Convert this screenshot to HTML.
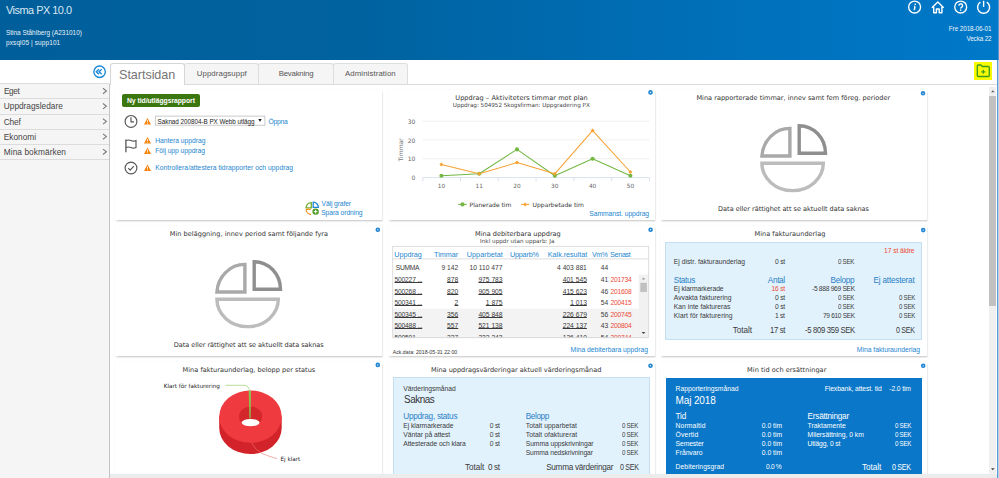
<!DOCTYPE html>
<html lang="sv"><head><meta charset="utf-8"><title>Visma PX 10.0 – Startsidan</title>
<style>
html,body{margin:0;padding:0;}
body{width:999px;height:478px;overflow:hidden;position:relative;background:#fff;font-family:"Liberation Sans",sans-serif;}
.a{position:absolute;}
.t{position:absolute;white-space:pre;}
.card{position:absolute;background:#fff;box-shadow:0.7px 1.5px 1.6px rgba(0,0,0,.16),0 0 1.2px rgba(0,0,0,.07);}
.hdr{left:0;top:0;width:999px;height:60px;background:linear-gradient(90deg,#005f9b 0%,#00629f 35%,#006fb8 70%,#0079c9 100%);}
.side{left:0;top:83.5px;width:109.5px;height:394.5px;background:#f5f5f5;border-right:1px solid #c4c4c4;box-sizing:border-box;}
.side i{position:absolute;left:0;width:109px;height:1px;background:#dcdcdc;}
.tab{position:absolute;top:63px;height:20.5px;box-sizing:border-box;border:1px solid #dedede;border-bottom:none;border-radius:3px 3px 0 0;background:#f5f5f5;}
.gear{position:absolute;width:1.3px;height:1.3px;border:1.65px solid #2386d3;border-radius:50%;}
</style></head><body>
<!-- header -->
<div class="a hdr"></div>
<svg class="a" style="left:900px;top:0" width="99" height="16" viewBox="900 0 99 16" fill="none" stroke="#fff" stroke-width="1.35">
 <circle cx="914.6" cy="7" r="5.95"/><path d="M915 6.3 L914.4 9.7" stroke-width="1.5"/><path d="M913.9 6.2h1.2 M913.6 9.8h1.5" stroke-width="0.8"/><circle cx="915.25" cy="4.25" r="0.85" fill="#fff" stroke="none"/>
 <path d="M931.9 7.8 L937.8 2 L943.7 7.8 M933.7 6.8 V12.8 H936.4 V9 H939.2 V12.8 H941.9 V6.8" stroke-width="1.4" stroke-linejoin="round"/>
 <circle cx="960.7" cy="7" r="5.95"/><path d="M958.9 5.7 a1.85 1.85 0 1 1 2.6 1.65 q-.8.4 -.8 1.25" stroke-width="1.35"/><circle cx="960.7" cy="10.1" r="0.8" fill="#fff" stroke="none"/>
 <path d="M980.4 2.2 a6 6 0 1 0 6.4 0" stroke-width="1.4"/><path d="M983.6 0.8 V6.9" stroke-width="1.4"/>
</svg>
<div class="a" style="left:997.6px;top:0;width:1.4px;height:60px;background:#4f95cf"></div>
<!-- tab bar -->
<div class="a" style="left:110px;top:60px;width:889px;height:23.5px;background:#fff;border-bottom:1px solid #dcdcdc;box-sizing:content-box"></div>
<div class="tab" style="left:183.8px;width:75px"></div>
<div class="tab" style="left:257.8px;width:76.5px"></div>
<div class="tab" style="left:333.3px;width:74.5px"></div>
<div class="tab" style="left:110.3px;width:74.5px;height:21.5px;background:#fff;border-color:#d6d6d6"></div>
<div class="a" style="left:974px;top:62.3px;width:18.3px;height:17.6px;background:#f8fa05"></div>
<svg class="a" style="left:974px;top:62px" width="19" height="18" viewBox="974 62 19 18" fill="none" stroke="#3c9a1c" stroke-width="1.3" stroke-linejoin="round">
 <path d="M977.3 66 q0-1 1-1 h2.6 l1.4 1.5 h6 q1 0 1 1 v8 q0 1 -1 1 h-10 q-1 0 -1-1 z"/><path d="M983.3 69.8v4 M981.3 71.8h4" stroke-width="1.2"/>
</svg>
<!-- sidebar -->
<div class="a side">
 <i style="top:-0.3px"></i><i style="top:14.9px"></i><i style="top:30.1px"></i><i style="top:45.3px"></i><i style="top:60.5px"></i><i style="top:75.7px"></i>
</div>
<svg class="a" style="left:90px;top:62px" width="20" height="100" viewBox="90 62 20 100" fill="none">
 <circle cx="99.6" cy="71.75" r="5.75" stroke="#1487d8" stroke-width="1.35"/>
 <path d="M98.9 69.35 l-2.6 2.4 l2.6 2.4 M101.7 69.35 l-2.6 2.4 l2.6 2.4" stroke="#1487d8" stroke-width="1.35"/>
 <g stroke="#7a7a7a" stroke-width="1.1">
  <path d="M103 88.3 l3.4 2.7 l-3.4 2.7"/><path d="M103 103.5 l3.4 2.7 l-3.4 2.7"/><path d="M103 118.7 l3.4 2.7 l-3.4 2.7"/><path d="M103 133.9 l3.4 2.7 l-3.4 2.7"/><path d="M103 149.1 l3.4 2.7 l-3.4 2.7"/>
 </g>
</svg>
<!-- bottom strip & scrollbar -->
<div class="a" style="left:989.3px;top:87px;width:7px;height:387.5px;background:#f0f0f0"></div>
<div class="a" style="left:989.3px;top:95.8px;width:7px;height:210px;background:#c1c1c1"></div>
<svg class="a" style="left:989px;top:87px" width="8" height="388" viewBox="989 87 8 388"><path d="M991 92.3 l1.8-2 l1.8 2z" fill="#606060"/><path d="M991 468.2 l1.8 2 l1.8-2z" fill="#404040"/></svg>
<div class="a" style="left:997px;top:60px;width:1.4px;height:418px;background:#5b9bd5"></div>
<div class="a" style="left:998.4px;top:60px;width:0.6px;height:418px;background:#b9d3ec"></div>

<!-- cards -->
<div class="card" style="left:115px;top:89.7px;width:267.4px;height:130.1px"></div>
<div class="card" style="left:387.6px;top:89.7px;width:267.5px;height:130.1px"></div>
<div class="card" style="left:660px;top:89.7px;width:267.4px;height:130.1px"></div>
<div class="card" style="left:115px;top:225.8px;width:267.4px;height:130.1px"></div>
<div class="card" style="left:387.6px;top:225.8px;width:267.5px;height:130.1px"></div>
<div class="card" style="left:660px;top:225.8px;width:267.4px;height:130.1px"></div>
<div class="card" style="left:115px;top:361.9px;width:267.4px;height:116px"></div>
<div class="card" style="left:387.6px;top:361.9px;width:267.5px;height:116px"></div>
<div class="card" style="left:660px;top:361.9px;width:267.4px;height:116px"></div>
<!-- gears -->
<svg class="a" style="left:0;top:0" width="999" height="478" viewBox="0 0 999 478" fill="none" stroke="#2386d3" stroke-width="1.7"><circle cx="650.5" cy="92.4" r="1.45"/><circle cx="923.0" cy="93.3" r="1.45"/><circle cx="377.8" cy="229.7" r="1.45"/><circle cx="650.6" cy="229.7" r="1.45"/><circle cx="923.2" cy="230.1" r="1.45"/><circle cx="377.8" cy="364.9" r="1.45"/><circle cx="650.5" cy="365.7" r="1.45"/><circle cx="923.2" cy="365.8" r="1.45"/></svg>

<!-- card1 -->
<div class="a" style="left:121.5px;top:94.4px;width:78.6px;height:12.2px;background:#3c760f;border-radius:2px"></div>
<svg class="a" style="left:120px;top:110px" width="150" height="70" viewBox="120 110 150 70" fill="none">
 <rect x="155.3" y="116.1" width="109.6" height="9.1" fill="#fff" stroke="#bdbdbd" stroke-width="0.8"/>
 <g stroke="#555" stroke-width="1.15">
  <circle cx="131" cy="121.4" r="5.9"/><path d="M131 117.2 V121.8 H134"/>
  <path d="M125.9 139.4 V152.2" stroke-width="1.3"/><path d="M126 140.6 q2.5-1.2 5 0 t5 0 V147.6 q-2.5 1.2-5 0 t-5 0"/>
  <circle cx="131" cy="168" r="5.9"/><path d="M128.3 168.2 l1.9 1.9 l3.6-3.9"/>
 </g>
 <g fill="#f5820b">
  <path d="M147.5 118.1 l3.5 6.4 h-7z"/><path d="M147.5 137.0 l3.5 6.4 h-7z"/><path d="M147.5 147.5 l3.5 6.4 h-7z"/><path d="M147.5 164.5 l3.5 6.4 h-7z"/>
 </g>
 <g stroke="#fff" stroke-width="0.8"><path d="M147.5 120.2v2.2 M147.5 123.0v0.8 M147.5 139.1v2.2 M147.5 141.9v0.8 M147.5 149.6v2.2 M147.5 152.4v0.8 M147.5 166.6v2.2 M147.5 169.4v0.8"/></g>
 <path d="M258.3 119 h3.4 l-1.7 2.8z" fill="#111"/>
</svg>
<svg class="a" style="left:304px;top:200px" width="17" height="17" viewBox="304 200 17 17" fill="none" stroke-width="1.3">
 <path d="M311.3 202.6 a5.2 5.2 0 0 0 -5.2 5.2 h5.2z" stroke="#6fae2e"/>
 <path d="M313.2 202.2 a5.2 5.2 0 0 1 5.2 5.2 h-5.2z" stroke="#1c86d6"/>
 <path d="M306.1 209.3 a5.2 5.2 0 0 0 5 5.2 M306.1 209.3 h4.6" stroke="#f59322"/>
 <circle cx="315.6" cy="211.6" r="3.2" fill="#4e9a22" stroke="none"/><path d="M315.6 209.8v3.6 M313.8 211.6h3.6" stroke="#fff" stroke-width="1"/>
</svg>

<!-- card2 chart -->
<svg class="a" style="left:388px;top:110px" width="267" height="100" viewBox="388 110 267 100" fill="none">
 <g stroke="#e6e6e6" stroke-width="0.6"><path d="M422.8 121.2H649.5 M422.8 139.9H649.5 M422.8 158.7H649.5"/></g>
 <path d="M422.8 177.6H649.5 M422.8 177.6v3.6 M460.5 177.6v3.6 M498.3 177.6v3.6 M536.1 177.6v3.6 M573.9 177.6v3.6 M611.7 177.6v3.6 M649.5 177.6v3.6" stroke="#ccd6eb" stroke-width="0.7"/>
 <polyline points="441.4,175.7 479.2,173.8 517,149.4 554.8,175.7 592.6,158.8 630.4,175.7" stroke="#74b843" stroke-width="1.05" stroke-linejoin="round"/>
 <polyline points="441.4,164.4 479.2,173.8 517,162.6 554.8,173.8 592.6,130.6 630.4,172" stroke="#f7a233" stroke-width="1.05" stroke-linejoin="round"/>
 <g fill="#74b843"><circle cx="441.4" cy="175.7" r="2.05"/><circle cx="479.2" cy="173.8" r="2.05"/><circle cx="517" cy="149.4" r="2.05"/><circle cx="554.8" cy="175.7" r="2.05"/><circle cx="592.6" cy="158.8" r="2.05"/><circle cx="630.4" cy="175.7" r="2.05"/></g>
 <g fill="#f7a233"><path d="M441.4 162.4l2 2-2 2-2-2z M479.2 171.8l2 2-2 2-2-2z M517 160.6l2 2-2 2-2-2z M554.8 171.8l2 2-2 2-2-2z M592.6 128.6l2 2-2 2-2-2z M630.4 170l2 2-2 2-2-2z"/></g>
 <path d="M458.3 204.4h8.4" stroke="#74b843" stroke-width="1.05"/><circle cx="462.5" cy="204.4" r="2.05" fill="#74b843"/>
 <path d="M521 204.4h8.4" stroke="#f7a233" stroke-width="1.05"/><path d="M525.2 202.4l2 2-2 2-2-2z" fill="#f7a233"/>
 <text transform="translate(402.6 149.8) rotate(-90)" text-anchor="middle" font-family="DejaVu Sans, Liberation Sans, sans-serif" font-size="6.1" fill="#777">Timmar</text>
</svg>

<!-- no-data pies -->
<svg class="a" style="left:755px;top:120px" width="80" height="78" viewBox="755 120 80 78" fill="none" stroke-width="3.4">
 <path d="M789.9 128.4 V156 H761.9 A28 29.6 0 0 1 789.9 128.4z" stroke="#a9a9a9"/>
 <path d="M799.2 125.7 A26.3 27.6 0 0 1 825.5 153.3 H799.2z" stroke="#8f8f8f"/>
 <path d="M761.9 163.3 H823.3 A30.7 27.4 0 0 1 761.9 163.3z" stroke="#bcbcbc"/>
</svg>
<svg class="a" style="left:209.5px;top:256.1px" width="80" height="78" viewBox="755 120 80 78" fill="none" stroke-width="3.4">
 <path d="M789.9 128.4 V156 H761.9 A28 29.6 0 0 1 789.9 128.4z" stroke="#a9a9a9"/>
 <path d="M799.2 125.7 A26.3 27.6 0 0 1 825.5 153.3 H799.2z" stroke="#8f8f8f"/>
 <path d="M761.9 163.3 H823.3 A30.7 27.4 0 0 1 761.9 163.3z" stroke="#bcbcbc"/>
</svg>

<!-- card5 table -->
<svg class="a" style="left:390px;top:244px" width="262" height="96" viewBox="390 244 262 96">
 <rect x="392.7" y="308.6" width="246" height="29.1" fill="#f3f3f3"/>
 <rect x="638.8" y="274.6" width="9.9" height="63.1" fill="#f1f1f1"/>
 <rect x="640.3" y="282.8" width="6.6" height="9.2" fill="#c1c1c1"/>
 <path d="M641.6 279.6 l1.9-2 l1.9 2z" fill="#a0a0a0"/><path d="M641.6 332 l1.9 2 l1.9-2z" fill="#444"/>
 <rect x="392.7" y="246.3" width="256" height="91.4" fill="none" stroke="#d6d6d6" stroke-width="0.8"/>
 <path d="M392.7 258.9 H648.7" stroke="#d6d6d6" stroke-width="0.8"/>
</svg>

<!-- card6 panel -->
<div class="a" style="left:665px;top:241.7px;width:256.5px;height:98.8px;background:#e2f2fd;border:0.6px solid #c4dff2;box-sizing:border-box"></div>

<!-- card7 donut -->
<svg class="a" style="left:160px;top:380px" width="160" height="90" viewBox="160 380 160 90" fill="none">
 <path d="M219.2 416.6 V428.1 A31.25 26 0 0 0 281.7 428.1 V416.6z" fill="#d3232a"/>
 <ellipse cx="250.45" cy="416.6" rx="31.25" ry="26.2" fill="#ef3a3f"/>
 <ellipse cx="250.6" cy="416.5" rx="11.6" ry="10" fill="#d3272c"/>
 <ellipse cx="250.6" cy="422.6" rx="8.9" ry="3.7" fill="#fff"/>
 <path d="M248.7 391 L251 390.6 L250.6 418.4 L249.4 418.4z" fill="#8cc152"/>
 <path d="M225.5 385.3 H244 q5 0 5.4 6" stroke="#9ccf6b" stroke-width="0.7"/>
 <path d="M251.6 442.7 q4 8 10 10.6 t15.4 5.3" stroke="#f0787c" stroke-width="0.6"/>
</svg>

<!-- card8 panel -->
<div class="a" style="left:393.2px;top:377.4px;width:256.4px;height:100px;background:#e2f2fd;border:0.6px solid #c4dff2;border-bottom:none;box-sizing:border-box"></div>
<!-- card9 panel -->
<div class="a" style="left:665.6px;top:377.6px;width:256.1px;height:100px;background:#0a77c9"></div>

<span class="t" style="left:6.00px;top:2.50px;font:400 11.00px/14.3px 'Liberation Sans', sans-serif;color:#dbe8f3;letter-spacing:-0.495px;transform:scaleX(0.991);transform-origin:0 0;">Visma PX 10.0</span>
<span class="t" style="left:6.00px;top:29.36px;font:400 6.45px/8.38px 'Liberation Sans', sans-serif;color:#e8f1f8;">Stina Ståhlberg (A231010)</span>
<span class="t" style="left:6.00px;top:39.36px;font:400 6.45px/8.38px 'Liberation Sans', sans-serif;color:#e8f1f8;letter-spacing:0.129px;">pxsql05 | supp101</span>
<span class="t" style="left:948.80px;top:24.66px;font:400 6.30px/8.19px 'Liberation Sans', sans-serif;color:#eef5fb;letter-spacing:-0.056px;">Fre 2018-06-01</span>
<span class="t" style="left:966.50px;top:34.66px;font:400 6.30px/8.19px 'Liberation Sans', sans-serif;color:#eef5fb;letter-spacing:-0.117px;">Vecka 22</span>
<span class="t" style="left:119.10px;top:66.96px;font:400 12.60px/16.38px 'Liberation Sans', sans-serif;color:#757575;letter-spacing:-0.059px;">Startsidan</span>
<span class="t" style="left:196.80px;top:69.08px;font:400 7.80px/10.14px 'Liberation Sans', sans-serif;color:#555;letter-spacing:0.091px;">Uppdragsuppf</span>
<span class="t" style="left:278.70px;top:69.08px;font:400 7.80px/10.14px 'Liberation Sans', sans-serif;color:#555;letter-spacing:-0.203px;">Bevakning</span>
<span class="t" style="left:345.00px;top:69.08px;font:400 7.80px/10.14px 'Liberation Sans', sans-serif;color:#555;letter-spacing:0.098px;">Administration</span>
<span class="t" style="left:3.80px;top:86.26px;font:400 8.30px/10.79px 'Liberation Sans', sans-serif;color:#444;letter-spacing:-0.373px;transform:scaleX(0.991);transform-origin:0 0;">Eget</span>
<span class="t" style="left:3.80px;top:101.46px;font:400 8.30px/10.79px 'Liberation Sans', sans-serif;color:#444;letter-spacing:-0.005px;">Uppdragsledare</span>
<span class="t" style="left:3.80px;top:116.66px;font:400 8.30px/10.79px 'Liberation Sans', sans-serif;color:#444;letter-spacing:-0.178px;">Chef</span>
<span class="t" style="left:3.80px;top:131.85px;font:400 8.30px/10.79px 'Liberation Sans', sans-serif;color:#444;letter-spacing:-0.015px;">Ekonomi</span>
<span class="t" style="left:3.80px;top:147.05px;font:400 8.30px/10.79px 'Liberation Sans', sans-serif;color:#444;letter-spacing:0.065px;">Mina bokmärken</span>
<span class="t" style="left:127.00px;top:97.13px;font:700 6.80px/8.84px 'Liberation Sans', sans-serif;color:#fff;letter-spacing:-0.038px;">Ny tid/utläggsrapport</span>
<span class="t" style="left:157.60px;top:118.36px;font:400 6.30px/8.19px 'Liberation Sans', sans-serif;color:#222;letter-spacing:-0.021px;">Saknad 200804-B PX Webb utlägg</span>
<span class="t" style="left:268.60px;top:118.06px;font:400 6.75px/8.78px 'Liberation Sans', sans-serif;color:#2586cf;letter-spacing:-0.292px;">Öppna</span>
<span class="t" style="left:155.20px;top:136.86px;font:400 6.75px/8.78px 'Liberation Sans', sans-serif;color:#2586cf;letter-spacing:-0.033px;">Hantera uppdrag</span>
<span class="t" style="left:155.20px;top:147.06px;font:400 6.75px/8.78px 'Liberation Sans', sans-serif;color:#2586cf;letter-spacing:-0.057px;">Följ upp uppdrag</span>
<span class="t" style="left:155.20px;top:163.81px;font:400 6.75px/8.78px 'Liberation Sans', sans-serif;color:#2586cf;letter-spacing:0.027px;">Kontrollera/attestera tidrapporter och uppdrag</span>
<span class="t" style="left:321.60px;top:200.16px;font:400 6.75px/8.78px 'Liberation Sans', sans-serif;color:#2586cf;letter-spacing:-0.136px;">Välj grafer</span>
<span class="t" style="left:321.20px;top:208.86px;font:400 6.75px/8.78px 'Liberation Sans', sans-serif;color:#2586cf;letter-spacing:-0.084px;">Spara ordning</span>
<span class="t" style="left:455.30px;top:93.69px;font:400 6.55px/8.52px 'DejaVu Sans', 'Liberation Sans', sans-serif;color:#333;letter-spacing:0.056px;">Uppdrag – Aktiviteters timmar mot plan</span>
<span class="t" style="left:452.80px;top:102.48px;font:400 5.65px/7.35px 'DejaVu Sans', 'Liberation Sans', sans-serif;color:#444;letter-spacing:-0.016px;">Uppdrag: 504952 Skogsfirman: Uppgradering PX</span>
<span class="t" style="left:469.60px;top:201.35px;font:400 6.00px/7.8px 'DejaVu Sans', 'Liberation Sans', sans-serif;color:#333;letter-spacing:-0.014px;">Planerade tim</span>
<span class="t" style="left:532.60px;top:201.35px;font:400 6.00px/7.8px 'DejaVu Sans', 'Liberation Sans', sans-serif;color:#333;letter-spacing:0.025px;">Upparbetade tim</span>
<span class="t" style="left:589.30px;top:210.36px;font:400 6.75px/8.78px 'Liberation Sans', sans-serif;color:#2586cf;letter-spacing:-0.062px;">Sammanst. uppdrag</span>
<span class="t" style="left:696.40px;top:93.89px;font:400 6.55px/8.52px 'DejaVu Sans', 'Liberation Sans', sans-serif;color:#333;letter-spacing:0.014px;">Mina rapporterade timmar, innev samt fem föreg. perioder</span>
<span class="t" style="left:718.10px;top:204.99px;font:400 6.55px/8.52px 'DejaVu Sans', 'Liberation Sans', sans-serif;color:#333;letter-spacing:-0.025px;">Data eller rättighet att se aktuellt data saknas</span>
<span class="t" style="left:169.80px;top:230.19px;font:400 6.55px/8.52px 'DejaVu Sans', 'Liberation Sans', sans-serif;color:#333;letter-spacing:0.025px;">Min beläggning, innev period samt följande fyra</span>
<span class="t" style="left:173.70px;top:341.19px;font:400 6.55px/8.52px 'DejaVu Sans', 'Liberation Sans', sans-serif;color:#333;letter-spacing:-0.042px;">Data eller rättighet att se aktuellt data saknas</span>
<span class="t" style="left:475.00px;top:230.39px;font:400 6.55px/8.52px 'DejaVu Sans', 'Liberation Sans', sans-serif;color:#333;letter-spacing:0.008px;">Mina debiterbara uppdrag</span>
<span class="t" style="left:480.10px;top:238.07px;font:400 5.65px/7.35px 'DejaVu Sans', 'Liberation Sans', sans-serif;color:#444;letter-spacing:0.019px;">Inkl uppdr utan upparb: Ja</span>
<span class="t" style="left:394.30px;top:250.27px;font:400 7.20px/9.36px 'Liberation Sans', sans-serif;color:#2586cf;">Uppdrag</span>
<span class="t" style="left:434.00px;top:250.27px;font:400 7.20px/9.36px 'Liberation Sans', sans-serif;color:#2586cf;letter-spacing:0.034px;">Timmar</span>
<span class="t" style="left:466.80px;top:250.27px;font:400 7.20px/9.36px 'Liberation Sans', sans-serif;color:#2586cf;letter-spacing:0.053px;">Upparbetat</span>
<span class="t" style="left:509.90px;top:250.27px;font:400 7.20px/9.36px 'Liberation Sans', sans-serif;color:#2586cf;letter-spacing:-0.153px;">Upparb%</span>
<span class="t" style="left:547.80px;top:250.27px;font:400 7.20px/9.36px 'Liberation Sans', sans-serif;color:#2586cf;letter-spacing:-0.018px;">Kalk.resultat</span>
<span class="t" style="left:592.40px;top:250.27px;font:400 7.20px/9.36px 'Liberation Sans', sans-serif;color:#2586cf;letter-spacing:-0.324px;transform:scaleX(0.956);transform-origin:0 0;">Vm%</span>
<span class="t" style="left:610.00px;top:250.27px;font:400 7.20px/9.36px 'Liberation Sans', sans-serif;color:#2586cf;letter-spacing:-0.303px;">Senast</span>
<span class="t" style="left:395.80px;top:264.19px;font:400 6.70px/8.71px 'Liberation Sans', sans-serif;color:#3a3a3a;letter-spacing:-0.301px;">SUMMA</span>
<span class="t" style="left:441.53px;top:264.19px;font:400 6.70px/8.71px 'Liberation Sans', sans-serif;color:#3a3a3a;">9 142</span>
<span class="t" style="left:469.56px;top:264.19px;font:400 6.70px/8.71px 'Liberation Sans', sans-serif;color:#3a3a3a;">10 110 477</span>
<span class="t" style="left:557.09px;top:264.19px;font:400 6.70px/8.71px 'Liberation Sans', sans-serif;color:#3a3a3a;">4 403 881</span>
<span class="t" style="left:600.75px;top:264.19px;font:400 6.70px/8.71px 'Liberation Sans', sans-serif;color:#3a3a3a;">44</span>
<span class="t" style="left:394.60px;top:276.19px;font:400 6.70px/8.71px 'Liberation Sans', sans-serif;color:#3a3a3a;letter-spacing:-0.212px;text-decoration:underline;text-decoration-thickness:0.55px;text-underline-offset:0.4px;">500227 ...</span>
<span class="t" style="left:447.12px;top:276.19px;font:400 6.70px/8.71px 'Liberation Sans', sans-serif;color:#3a3a3a;text-decoration:underline;text-decoration-thickness:0.55px;text-underline-offset:0.4px;">878</span>
<span class="t" style="left:478.38px;top:276.19px;font:400 6.70px/8.71px 'Liberation Sans', sans-serif;color:#3a3a3a;text-decoration:underline;text-decoration-thickness:0.55px;text-underline-offset:0.4px;">975 783</span>
<span class="t" style="left:562.68px;top:276.19px;font:400 6.70px/8.71px 'Liberation Sans', sans-serif;color:#3a3a3a;text-decoration:underline;text-decoration-thickness:0.55px;text-underline-offset:0.4px;">401 545</span>
<span class="t" style="left:600.75px;top:276.19px;font:400 6.70px/8.71px 'Liberation Sans', sans-serif;color:#3a3a3a;">41</span>
<span class="t" style="left:610.60px;top:276.19px;font:400 6.70px/8.71px 'Liberation Sans', sans-serif;color:#ee4a33;letter-spacing:-0.232px;">201734</span>
<span class="t" style="left:394.60px;top:287.75px;font:400 6.70px/8.71px 'Liberation Sans', sans-serif;color:#3a3a3a;letter-spacing:-0.212px;text-decoration:underline;text-decoration-thickness:0.55px;text-underline-offset:0.4px;">500268 ...</span>
<span class="t" style="left:447.12px;top:287.75px;font:400 6.70px/8.71px 'Liberation Sans', sans-serif;color:#3a3a3a;text-decoration:underline;text-decoration-thickness:0.55px;text-underline-offset:0.4px;">820</span>
<span class="t" style="left:478.38px;top:287.75px;font:400 6.70px/8.71px 'Liberation Sans', sans-serif;color:#3a3a3a;text-decoration:underline;text-decoration-thickness:0.55px;text-underline-offset:0.4px;">905 905</span>
<span class="t" style="left:562.68px;top:287.75px;font:400 6.70px/8.71px 'Liberation Sans', sans-serif;color:#3a3a3a;text-decoration:underline;text-decoration-thickness:0.55px;text-underline-offset:0.4px;">415 623</span>
<span class="t" style="left:600.75px;top:287.75px;font:400 6.70px/8.71px 'Liberation Sans', sans-serif;color:#3a3a3a;">46</span>
<span class="t" style="left:610.60px;top:287.75px;font:400 6.70px/8.71px 'Liberation Sans', sans-serif;color:#ee4a33;letter-spacing:-0.232px;">201608</span>
<span class="t" style="left:394.60px;top:299.31px;font:400 6.70px/8.71px 'Liberation Sans', sans-serif;color:#3a3a3a;letter-spacing:-0.212px;text-decoration:underline;text-decoration-thickness:0.55px;text-underline-offset:0.4px;">500341 ...</span>
<span class="t" style="left:454.57px;top:299.31px;font:400 6.70px/8.71px 'Liberation Sans', sans-serif;color:#3a3a3a;text-decoration:underline;text-decoration-thickness:0.55px;text-underline-offset:0.4px;">2</span>
<span class="t" style="left:485.83px;top:299.31px;font:400 6.70px/8.71px 'Liberation Sans', sans-serif;color:#3a3a3a;text-decoration:underline;text-decoration-thickness:0.55px;text-underline-offset:0.4px;">1 875</span>
<span class="t" style="left:570.13px;top:299.31px;font:400 6.70px/8.71px 'Liberation Sans', sans-serif;color:#3a3a3a;text-decoration:underline;text-decoration-thickness:0.55px;text-underline-offset:0.4px;">1 013</span>
<span class="t" style="left:600.75px;top:299.31px;font:400 6.70px/8.71px 'Liberation Sans', sans-serif;color:#3a3a3a;">54</span>
<span class="t" style="left:610.60px;top:299.31px;font:400 6.70px/8.71px 'Liberation Sans', sans-serif;color:#ee4a33;letter-spacing:-0.232px;">200415</span>
<span class="t" style="left:394.60px;top:310.88px;font:400 6.70px/8.71px 'Liberation Sans', sans-serif;color:#3a3a3a;letter-spacing:-0.212px;text-decoration:underline;text-decoration-thickness:0.55px;text-underline-offset:0.4px;">500345 ...</span>
<span class="t" style="left:447.12px;top:310.88px;font:400 6.70px/8.71px 'Liberation Sans', sans-serif;color:#3a3a3a;text-decoration:underline;text-decoration-thickness:0.55px;text-underline-offset:0.4px;">356</span>
<span class="t" style="left:478.38px;top:310.88px;font:400 6.70px/8.71px 'Liberation Sans', sans-serif;color:#3a3a3a;text-decoration:underline;text-decoration-thickness:0.55px;text-underline-offset:0.4px;">405 848</span>
<span class="t" style="left:562.68px;top:310.88px;font:400 6.70px/8.71px 'Liberation Sans', sans-serif;color:#3a3a3a;text-decoration:underline;text-decoration-thickness:0.55px;text-underline-offset:0.4px;">226 679</span>
<span class="t" style="left:600.75px;top:310.88px;font:400 6.70px/8.71px 'Liberation Sans', sans-serif;color:#3a3a3a;">56</span>
<span class="t" style="left:610.60px;top:310.88px;font:400 6.70px/8.71px 'Liberation Sans', sans-serif;color:#ee4a33;letter-spacing:-0.232px;">200745</span>
<span class="t" style="left:394.60px;top:322.44px;font:400 6.70px/8.71px 'Liberation Sans', sans-serif;color:#3a3a3a;letter-spacing:-0.212px;text-decoration:underline;text-decoration-thickness:0.55px;text-underline-offset:0.4px;">500488 ...</span>
<span class="t" style="left:447.12px;top:322.44px;font:400 6.70px/8.71px 'Liberation Sans', sans-serif;color:#3a3a3a;text-decoration:underline;text-decoration-thickness:0.55px;text-underline-offset:0.4px;">557</span>
<span class="t" style="left:478.38px;top:322.44px;font:400 6.70px/8.71px 'Liberation Sans', sans-serif;color:#3a3a3a;text-decoration:underline;text-decoration-thickness:0.55px;text-underline-offset:0.4px;">521 138</span>
<span class="t" style="left:562.68px;top:322.44px;font:400 6.70px/8.71px 'Liberation Sans', sans-serif;color:#3a3a3a;text-decoration:underline;text-decoration-thickness:0.55px;text-underline-offset:0.4px;">224 137</span>
<span class="t" style="left:600.75px;top:322.44px;font:400 6.70px/8.71px 'Liberation Sans', sans-serif;color:#3a3a3a;">43</span>
<span class="t" style="left:610.60px;top:322.44px;font:400 6.70px/8.71px 'Liberation Sans', sans-serif;color:#ee4a33;letter-spacing:-0.232px;">200804</span>
<span class="t" style="left:394.60px;top:334.00px;font:400 6.70px/8.71px 'Liberation Sans', sans-serif;color:#3a3a3a;letter-spacing:-0.212px;text-decoration:underline;text-decoration-thickness:0.55px;text-underline-offset:0.4px;">500501 ...</span>
<span class="t" style="left:447.12px;top:334.00px;font:400 6.70px/8.71px 'Liberation Sans', sans-serif;color:#3a3a3a;text-decoration:underline;text-decoration-thickness:0.55px;text-underline-offset:0.4px;">227</span>
<span class="t" style="left:478.38px;top:334.00px;font:400 6.70px/8.71px 'Liberation Sans', sans-serif;color:#3a3a3a;text-decoration:underline;text-decoration-thickness:0.55px;text-underline-offset:0.4px;">232 243</span>
<span class="t" style="left:562.68px;top:334.00px;font:400 6.70px/8.71px 'Liberation Sans', sans-serif;color:#3a3a3a;text-decoration:underline;text-decoration-thickness:0.55px;text-underline-offset:0.4px;">126 410</span>
<span class="t" style="left:600.75px;top:334.00px;font:400 6.70px/8.71px 'Liberation Sans', sans-serif;color:#3a3a3a;">54</span>
<span class="t" style="left:610.60px;top:334.00px;font:400 6.70px/8.71px 'Liberation Sans', sans-serif;color:#ee4a33;letter-spacing:-0.232px;">200744</span>
<span class="t" style="left:392.70px;top:349.07px;font:400 5.20px/6.76px 'Liberation Sans', sans-serif;color:#333;letter-spacing:0.021px;">Ack.data: 2018-05-31 22:00</span>
<span class="t" style="left:570.50px;top:346.46px;font:400 6.75px/8.78px 'Liberation Sans', sans-serif;color:#2586cf;letter-spacing:0.004px;">Mina debiterbara uppdrag</span>
<span class="t" style="left:754.50px;top:230.29px;font:400 6.55px/8.52px 'DejaVu Sans', 'Liberation Sans', sans-serif;color:#333;letter-spacing:0.025px;">Mina fakturaunderlag</span>
<span class="t" style="left:884.10px;top:246.96px;font:400 6.75px/8.78px 'Liberation Sans', sans-serif;color:#ee4a33;letter-spacing:-0.102px;">17 st äldre</span>
<span class="t" style="left:673.80px;top:258.16px;font:400 6.75px/8.78px 'Liberation Sans', sans-serif;color:#3a3a3a;letter-spacing:0.012px;">Ej distr. fakturaunderlag</span>
<span class="t" style="left:775.10px;top:258.16px;font:400 6.75px/8.78px 'Liberation Sans', sans-serif;color:#3a3a3a;letter-spacing:-0.260px;">0 st</span>
<span class="t" style="left:838.30px;top:258.16px;font:400 6.75px/8.78px 'Liberation Sans', sans-serif;color:#3a3a3a;letter-spacing:-0.304px;transform:scaleX(0.920);transform-origin:0 0;">0 SEK</span>
<span class="t" style="left:673.80px;top:276.22px;font:400 8.20px/10.66px 'Liberation Sans', sans-serif;color:#2a7fc4;letter-spacing:-0.329px;">Status</span>
<span class="t" style="left:767.80px;top:276.22px;font:400 8.20px/10.66px 'Liberation Sans', sans-serif;color:#2a7fc4;letter-spacing:-0.323px;">Antal</span>
<span class="t" style="left:830.60px;top:276.22px;font:400 8.20px/10.66px 'Liberation Sans', sans-serif;color:#2a7fc4;letter-spacing:-0.287px;">Belopp</span>
<span class="t" style="left:873.60px;top:276.22px;font:400 8.20px/10.66px 'Liberation Sans', sans-serif;color:#2a7fc4;letter-spacing:-0.213px;">Ej attesterat</span>
<span class="t" style="left:673.80px;top:285.06px;font:400 6.75px/8.78px 'Liberation Sans', sans-serif;color:#3a3a3a;letter-spacing:-0.081px;">Ej klarmarkerade</span>
<span class="t" style="left:771.60px;top:285.06px;font:400 6.75px/8.78px 'Liberation Sans', sans-serif;color:#ee4a33;letter-spacing:-0.259px;">16 st</span>
<span class="t" style="left:811.60px;top:285.06px;font:400 6.75px/8.78px 'Liberation Sans', sans-serif;color:#3a3a3a;letter-spacing:-0.304px;transform:scaleX(0.987);transform-origin:0 0;">-5 888 969 SEK</span>
<span class="t" style="left:673.80px;top:294.01px;font:400 6.75px/8.78px 'Liberation Sans', sans-serif;color:#3a3a3a;">Avvakta fakturering</span>
<span class="t" style="left:775.10px;top:294.01px;font:400 6.75px/8.78px 'Liberation Sans', sans-serif;color:#3a3a3a;letter-spacing:-0.260px;">0 st</span>
<span class="t" style="left:838.30px;top:294.01px;font:400 6.75px/8.78px 'Liberation Sans', sans-serif;color:#3a3a3a;letter-spacing:-0.304px;transform:scaleX(0.920);transform-origin:0 0;">0 SEK</span>
<span class="t" style="left:898.60px;top:294.01px;font:400 6.75px/8.78px 'Liberation Sans', sans-serif;color:#3a3a3a;letter-spacing:-0.304px;transform:scaleX(0.910);transform-origin:0 0;">0 SEK</span>
<span class="t" style="left:673.80px;top:302.96px;font:400 6.75px/8.78px 'Liberation Sans', sans-serif;color:#3a3a3a;">Kan inte faktureras</span>
<span class="t" style="left:775.10px;top:302.96px;font:400 6.75px/8.78px 'Liberation Sans', sans-serif;color:#3a3a3a;letter-spacing:-0.260px;">0 st</span>
<span class="t" style="left:838.30px;top:302.96px;font:400 6.75px/8.78px 'Liberation Sans', sans-serif;color:#3a3a3a;letter-spacing:-0.304px;transform:scaleX(0.920);transform-origin:0 0;">0 SEK</span>
<span class="t" style="left:898.60px;top:302.96px;font:400 6.75px/8.78px 'Liberation Sans', sans-serif;color:#3a3a3a;letter-spacing:-0.304px;transform:scaleX(0.910);transform-origin:0 0;">0 SEK</span>
<span class="t" style="left:673.80px;top:311.91px;font:400 6.75px/8.78px 'Liberation Sans', sans-serif;color:#3a3a3a;letter-spacing:0.070px;">Klart för fakturering</span>
<span class="t" style="left:775.30px;top:311.91px;font:400 6.75px/8.78px 'Liberation Sans', sans-serif;color:#3a3a3a;letter-spacing:-0.304px;transform:scaleX(0.994);transform-origin:0 0;">1 st</span>
<span class="t" style="left:822.60px;top:311.91px;font:400 6.75px/8.78px 'Liberation Sans', sans-serif;color:#3a3a3a;letter-spacing:-0.304px;transform:scaleX(0.967);transform-origin:0 0;">79 610 SEK</span>
<span class="t" style="left:898.60px;top:311.91px;font:400 6.75px/8.78px 'Liberation Sans', sans-serif;color:#3a3a3a;letter-spacing:-0.304px;transform:scaleX(0.910);transform-origin:0 0;">0 SEK</span>
<span class="t" style="left:732.80px;top:326.02px;font:400 8.20px/10.66px 'Liberation Sans', sans-serif;color:#3a3a3a;letter-spacing:-0.080px;">Totalt</span>
<span class="t" style="left:769.80px;top:326.02px;font:400 8.20px/10.66px 'Liberation Sans', sans-serif;color:#3a3a3a;letter-spacing:-0.369px;transform:scaleX(0.949);transform-origin:0 0;">17 st</span>
<span class="t" style="left:804.50px;top:326.02px;font:400 8.20px/10.66px 'Liberation Sans', sans-serif;color:#3a3a3a;letter-spacing:-0.369px;transform:scaleX(0.948);transform-origin:0 0;">-5 809 359 SEK</span>
<span class="t" style="left:896.00px;top:326.02px;font:400 8.20px/10.66px 'Liberation Sans', sans-serif;color:#3a3a3a;letter-spacing:-0.369px;transform:scaleX(0.872);transform-origin:0 0;">0 SEK</span>
<span class="t" style="left:856.80px;top:346.16px;font:400 6.75px/8.78px 'Liberation Sans', sans-serif;color:#2586cf;letter-spacing:-0.006px;">Mina fakturaunderlag</span>
<span class="t" style="left:182.60px;top:366.09px;font:400 6.55px/8.52px 'DejaVu Sans', 'Liberation Sans', sans-serif;color:#333;letter-spacing:0.016px;">Mina fakturaunderlag, belopp per status</span>
<span class="t" style="left:163.70px;top:383.34px;font:400 5.70px/7.41px 'DejaVu Sans', 'Liberation Sans', sans-serif;color:#222;">Klart för fakturering</span>
<span class="t" style="left:280.50px;top:455.65px;font:400 5.70px/7.41px 'DejaVu Sans', 'Liberation Sans', sans-serif;color:#222;letter-spacing:-0.022px;">Ej klart</span>
<span class="t" style="left:431.00px;top:366.29px;font:400 6.55px/8.52px 'DejaVu Sans', 'Liberation Sans', sans-serif;color:#333;letter-spacing:-0.008px;">Mina uppdragsvärderingar aktuell värderingsmånad</span>
<span class="t" style="left:403.30px;top:384.96px;font:400 6.75px/8.78px 'Liberation Sans', sans-serif;color:#3a3a3a;letter-spacing:-0.063px;">Värderingsmånad</span>
<span class="t" style="left:403.50px;top:393.35px;font:400 10.00px/13.0px 'Liberation Sans', sans-serif;color:#333;letter-spacing:-0.450px;transform:scaleX(0.985);transform-origin:0 0;">Saknas</span>
<span class="t" style="left:403.30px;top:411.72px;font:400 8.20px/10.66px 'Liberation Sans', sans-serif;color:#2a7fc4;letter-spacing:-0.256px;">Uppdrag, status</span>
<span class="t" style="left:525.70px;top:411.72px;font:400 8.20px/10.66px 'Liberation Sans', sans-serif;color:#2a7fc4;letter-spacing:-0.369px;">Belopp</span>
<span class="t" style="left:403.30px;top:421.86px;font:400 6.75px/8.78px 'Liberation Sans', sans-serif;color:#3a3a3a;letter-spacing:-0.061px;">Ej klarmarkerade</span>
<span class="t" style="left:489.80px;top:421.86px;font:400 6.75px/8.78px 'Liberation Sans', sans-serif;color:#3a3a3a;letter-spacing:-0.227px;">0 st</span>
<span class="t" style="left:403.30px;top:430.86px;font:400 6.75px/8.78px 'Liberation Sans', sans-serif;color:#3a3a3a;letter-spacing:-0.050px;">Väntar på attest</span>
<span class="t" style="left:489.80px;top:430.86px;font:400 6.75px/8.78px 'Liberation Sans', sans-serif;color:#3a3a3a;letter-spacing:-0.227px;">0 st</span>
<span class="t" style="left:403.30px;top:439.86px;font:400 6.75px/8.78px 'Liberation Sans', sans-serif;color:#3a3a3a;letter-spacing:-0.064px;">Attesterade och klara</span>
<span class="t" style="left:489.80px;top:439.86px;font:400 6.75px/8.78px 'Liberation Sans', sans-serif;color:#3a3a3a;letter-spacing:-0.227px;">0 st</span>
<span class="t" style="left:525.70px;top:421.86px;font:400 6.75px/8.78px 'Liberation Sans', sans-serif;color:#3a3a3a;letter-spacing:0.063px;">Totalt upparbetat</span>
<span class="t" style="left:622.10px;top:421.86px;font:400 6.75px/8.78px 'Liberation Sans', sans-serif;color:#3a3a3a;letter-spacing:-0.304px;transform:scaleX(0.915);transform-origin:0 0;">0 SEK</span>
<span class="t" style="left:525.70px;top:430.86px;font:400 6.75px/8.78px 'Liberation Sans', sans-serif;color:#3a3a3a;letter-spacing:0.072px;">Totalt ofakturerat</span>
<span class="t" style="left:622.10px;top:430.86px;font:400 6.75px/8.78px 'Liberation Sans', sans-serif;color:#3a3a3a;letter-spacing:-0.304px;transform:scaleX(0.915);transform-origin:0 0;">0 SEK</span>
<span class="t" style="left:525.70px;top:439.86px;font:400 6.75px/8.78px 'Liberation Sans', sans-serif;color:#3a3a3a;letter-spacing:-0.059px;">Summa uppskrivningar</span>
<span class="t" style="left:622.10px;top:439.86px;font:400 6.75px/8.78px 'Liberation Sans', sans-serif;color:#3a3a3a;letter-spacing:-0.304px;transform:scaleX(0.915);transform-origin:0 0;">0 SEK</span>
<span class="t" style="left:525.70px;top:448.86px;font:400 6.75px/8.78px 'Liberation Sans', sans-serif;color:#3a3a3a;letter-spacing:-0.091px;">Summa nedskrivningar</span>
<span class="t" style="left:622.10px;top:448.86px;font:400 6.75px/8.78px 'Liberation Sans', sans-serif;color:#3a3a3a;letter-spacing:-0.304px;transform:scaleX(0.915);transform-origin:0 0;">0 SEK</span>
<span class="t" style="left:464.90px;top:462.72px;font:400 8.20px/10.66px 'Liberation Sans', sans-serif;color:#3a3a3a;letter-spacing:-0.040px;">Totalt</span>
<span class="t" style="left:487.90px;top:462.72px;font:400 8.20px/10.66px 'Liberation Sans', sans-serif;color:#3a3a3a;letter-spacing:-0.369px;">0 st</span>
<span class="t" style="left:546.20px;top:462.72px;font:400 8.20px/10.66px 'Liberation Sans', sans-serif;color:#3a3a3a;letter-spacing:-0.294px;">Summa värderingar</span>
<span class="t" style="left:619.70px;top:462.72px;font:400 8.20px/10.66px 'Liberation Sans', sans-serif;color:#3a3a3a;letter-spacing:-0.369px;transform:scaleX(0.868);transform-origin:0 0;">0 SEK</span>
<span class="t" style="left:747.10px;top:366.39px;font:400 6.55px/8.52px 'DejaVu Sans', 'Liberation Sans', sans-serif;color:#333;letter-spacing:0.037px;">Min tid och ersättningar</span>
<span class="t" style="left:675.60px;top:384.76px;font:400 6.75px/8.78px 'Liberation Sans', sans-serif;color:#fff;letter-spacing:-0.014px;">Rapporteringsmånad</span>
<span class="t" style="left:675.60px;top:393.95px;font:400 10.00px/13.0px 'Liberation Sans', sans-serif;color:#fff;letter-spacing:-0.148px;">Maj 2018</span>
<span class="t" style="left:824.70px;top:384.76px;font:400 6.75px/8.78px 'Liberation Sans', sans-serif;color:#fff;letter-spacing:-0.076px;">Flexbank, attest. tid</span>
<span class="t" style="left:889.30px;top:384.76px;font:400 6.75px/8.78px 'Liberation Sans', sans-serif;color:#fff;letter-spacing:-0.115px;">-2.0 tim</span>
<span class="t" style="left:675.60px;top:411.72px;font:400 8.20px/10.66px 'Liberation Sans', sans-serif;color:#fff;letter-spacing:-0.194px;">Tid</span>
<span class="t" style="left:807.60px;top:411.72px;font:400 8.20px/10.66px 'Liberation Sans', sans-serif;color:#fff;letter-spacing:-0.237px;">Ersättningar</span>
<span class="t" style="left:675.60px;top:421.76px;font:400 6.75px/8.78px 'Liberation Sans', sans-serif;color:#fff;letter-spacing:0.127px;">Normaltid</span>
<span class="t" style="left:761.80px;top:421.76px;font:400 6.75px/8.78px 'Liberation Sans', sans-serif;color:#fff;letter-spacing:0.007px;">0.0 tim</span>
<span class="t" style="left:675.60px;top:430.76px;font:400 6.75px/8.78px 'Liberation Sans', sans-serif;color:#fff;letter-spacing:0.141px;">Övertid</span>
<span class="t" style="left:761.80px;top:430.76px;font:400 6.75px/8.78px 'Liberation Sans', sans-serif;color:#fff;letter-spacing:0.007px;">0.0 tim</span>
<span class="t" style="left:675.60px;top:439.76px;font:400 6.75px/8.78px 'Liberation Sans', sans-serif;color:#fff;letter-spacing:-0.098px;">Semester</span>
<span class="t" style="left:761.80px;top:439.76px;font:400 6.75px/8.78px 'Liberation Sans', sans-serif;color:#fff;letter-spacing:0.007px;">0.0 tim</span>
<span class="t" style="left:675.60px;top:448.76px;font:400 6.75px/8.78px 'Liberation Sans', sans-serif;color:#fff;letter-spacing:-0.030px;">Frånvaro</span>
<span class="t" style="left:761.80px;top:448.76px;font:400 6.75px/8.78px 'Liberation Sans', sans-serif;color:#fff;letter-spacing:0.007px;">0.0 tim</span>
<span class="t" style="left:807.60px;top:421.76px;font:400 6.75px/8.78px 'Liberation Sans', sans-serif;color:#fff;letter-spacing:0.046px;">Traktamente</span>
<span class="t" style="left:894.80px;top:421.76px;font:400 6.75px/8.78px 'Liberation Sans', sans-serif;color:#fff;letter-spacing:-0.304px;transform:scaleX(0.910);transform-origin:0 0;">0 SEK</span>
<span class="t" style="left:807.60px;top:430.76px;font:400 6.75px/8.78px 'Liberation Sans', sans-serif;color:#fff;letter-spacing:-0.025px;">Milersättning, 0 km</span>
<span class="t" style="left:894.80px;top:430.76px;font:400 6.75px/8.78px 'Liberation Sans', sans-serif;color:#fff;letter-spacing:-0.304px;transform:scaleX(0.910);transform-origin:0 0;">0 SEK</span>
<span class="t" style="left:807.60px;top:439.76px;font:400 6.75px/8.78px 'Liberation Sans', sans-serif;color:#fff;letter-spacing:-0.122px;">Utlägg, 0 st</span>
<span class="t" style="left:894.80px;top:439.76px;font:400 6.75px/8.78px 'Liberation Sans', sans-serif;color:#fff;letter-spacing:-0.304px;transform:scaleX(0.910);transform-origin:0 0;">0 SEK</span>
<span class="t" style="left:675.60px;top:463.16px;font:400 6.75px/8.78px 'Liberation Sans', sans-serif;color:#fff;letter-spacing:0.060px;">Debiteringsgrad</span>
<span class="t" style="left:766.40px;top:463.16px;font:400 6.75px/8.78px 'Liberation Sans', sans-serif;color:#fff;letter-spacing:-0.304px;transform:scaleX(0.980);transform-origin:0 0;">0.0 %</span>
<span class="t" style="left:862.10px;top:462.82px;font:400 8.20px/10.66px 'Liberation Sans', sans-serif;color:#fff;letter-spacing:-0.080px;">Totalt</span>
<span class="t" style="left:892.30px;top:462.82px;font:400 8.20px/10.66px 'Liberation Sans', sans-serif;color:#fff;letter-spacing:-0.369px;transform:scaleX(0.868);transform-origin:0 0;">0 SEK</span>
<span class="t" style="left:407.66px;top:117.85px;font:400 6.00px/7.8px 'DejaVu Sans', 'Liberation Sans', sans-serif;color:#666;">30</span>
<span class="t" style="left:407.66px;top:136.55px;font:400 6.00px/7.8px 'DejaVu Sans', 'Liberation Sans', sans-serif;color:#666;">20</span>
<span class="t" style="left:407.66px;top:155.35px;font:400 6.00px/7.8px 'DejaVu Sans', 'Liberation Sans', sans-serif;color:#666;">10</span>
<span class="t" style="left:411.48px;top:174.25px;font:400 6.00px/7.8px 'DejaVu Sans', 'Liberation Sans', sans-serif;color:#666;">0</span>
<span class="t" style="left:437.70px;top:182.88px;font:400 5.80px/7.54px 'DejaVu Sans', 'Liberation Sans', sans-serif;color:#666;letter-spacing:0.019px;">10</span>
<span class="t" style="left:475.50px;top:182.88px;font:400 5.80px/7.54px 'DejaVu Sans', 'Liberation Sans', sans-serif;color:#666;letter-spacing:0.019px;">11</span>
<span class="t" style="left:513.30px;top:182.88px;font:400 5.80px/7.54px 'DejaVu Sans', 'Liberation Sans', sans-serif;color:#666;letter-spacing:0.019px;">20</span>
<span class="t" style="left:551.10px;top:182.88px;font:400 5.80px/7.54px 'DejaVu Sans', 'Liberation Sans', sans-serif;color:#666;letter-spacing:0.019px;">30</span>
<span class="t" style="left:588.90px;top:182.88px;font:400 5.80px/7.54px 'DejaVu Sans', 'Liberation Sans', sans-serif;color:#666;letter-spacing:0.019px;">40</span>
<span class="t" style="left:626.70px;top:182.88px;font:400 5.80px/7.54px 'DejaVu Sans', 'Liberation Sans', sans-serif;color:#666;letter-spacing:0.019px;">50</span>
<div class="a" style="left:110px;top:474px;width:887px;height:4px;background:#ececec"></div>
<svg class="a" style="left:390px;top:336px" width="262" height="10" viewBox="390 336 262 10"><rect x="391" y="337.7" width="260" height="7.6" fill="#fff"/><path d="M392.7 337.7H648.7" stroke="#d6d6d6" stroke-width="0.8"/></svg>
</body></html>
